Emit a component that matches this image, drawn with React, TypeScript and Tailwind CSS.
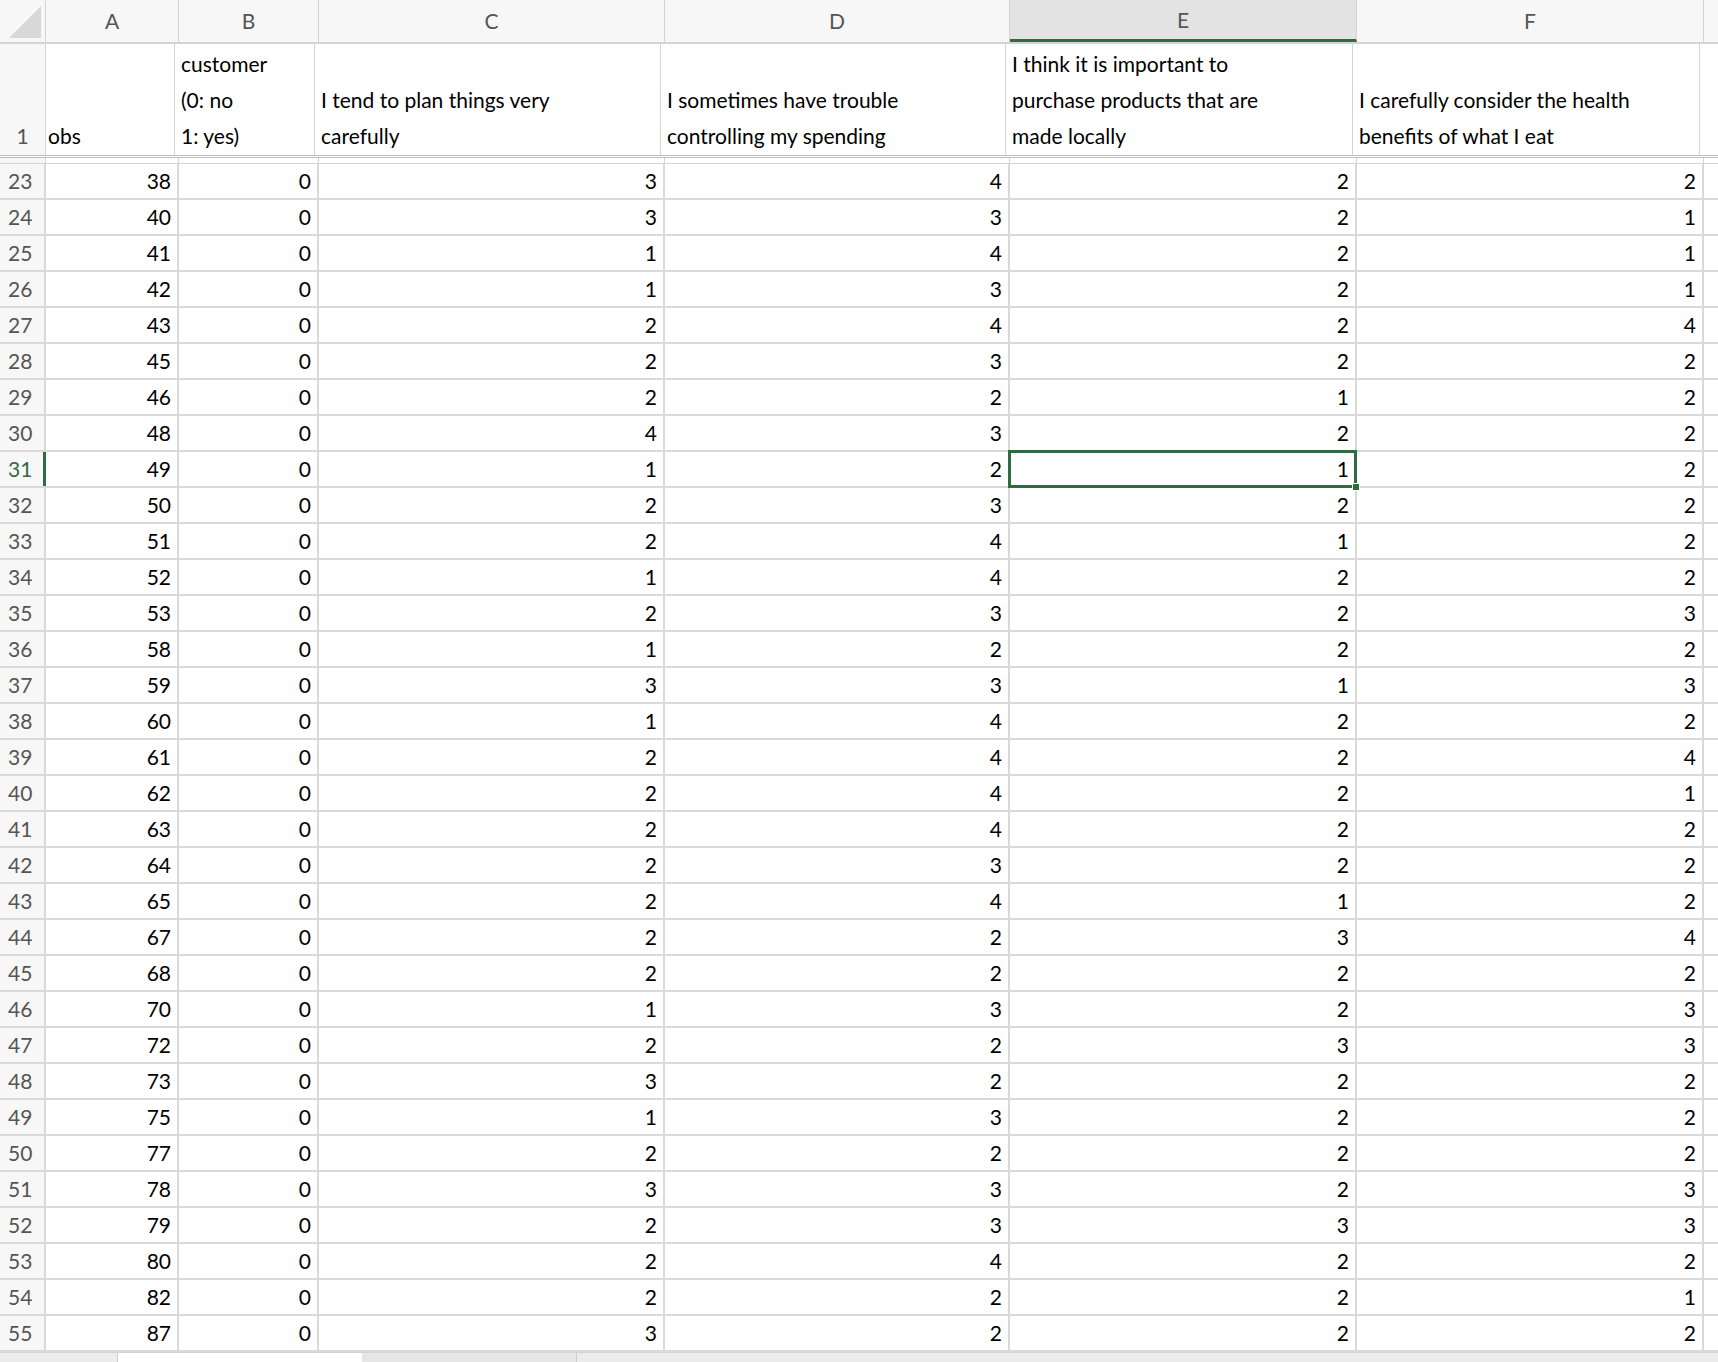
const rows: [number, number, number, number, number, number, number][] = [
  [23, 38, 0, 3, 4, 2, 2],
  [24, 40, 0, 3, 3, 2, 1],
  [25, 41, 0, 1, 4, 2, 1],
  [26, 42, 0, 1, 3, 2, 1],
  [27, 43, 0, 2, 4, 2, 4],
  [28, 45, 0, 2, 3, 2, 2],
  [29, 46, 0, 2, 2, 1, 2],
  [30, 48, 0, 4, 3, 2, 2],
  [31, 49, 0, 1, 2, 1, 2],
  [32, 50, 0, 2, 3, 2, 2],
  [33, 51, 0, 2, 4, 1, 2],
  [34, 52, 0, 1, 4, 2, 2],
  [35, 53, 0, 2, 3, 2, 3],
  [36, 58, 0, 1, 2, 2, 2],
  [37, 59, 0, 3, 3, 1, 3],
  [38, 60, 0, 1, 4, 2, 2],
  [39, 61, 0, 2, 4, 2, 4],
  [40, 62, 0, 2, 4, 2, 1],
  [41, 63, 0, 2, 4, 2, 2],
  [42, 64, 0, 2, 3, 2, 2],
  [43, 65, 0, 2, 4, 1, 2],
  [44, 67, 0, 2, 2, 3, 4],
  [45, 68, 0, 2, 2, 2, 2],
  [46, 70, 0, 1, 3, 2, 3],
  [47, 72, 0, 2, 2, 3, 3],
  [48, 73, 0, 3, 2, 2, 2],
  [49, 75, 0, 1, 3, 2, 2],
  [50, 77, 0, 2, 2, 2, 2],
  [51, 78, 0, 3, 3, 2, 3],
  [52, 79, 0, 2, 3, 3, 3],
  [53, 80, 0, 2, 4, 2, 2],
  [54, 82, 0, 2, 2, 2, 1],
  [55, 87, 0, 3, 2, 2, 2],
];

const widths = ["w-[46px]", "w-[133px]", "w-[140px]", "w-[346px]", "w-[345px]", "w-[347px]", "w-[347px]"];
const letters = ["", "A", "B", "C", "D", "E", "F"];
const headers = [
  "1",
  "obs",
  "customer\n(0: no\n1: yes)",
  "I tend to plan things very\ncarefully",
  "I sometimes have trouble\ncontrolling my spending",
  "I think it is important to\npurchase products that are\nmade locally",
  "I carefully consider the health\nbenefits of what I eat",
];

export default function App() {
  return (
    <div className="w-[1718px] h-[1362px] overflow-hidden bg-white text-[21px] text-black" style={{ fontFamily: "Lato, 'Open Sans', sans-serif" }}>
      {/* column letters */}
      <div className="flex h-[44px] bg-[#f7f7f7] border-b-2 border-[#d4d4d4]">
        {letters.map((l, i) => (
          <div
            key={i}
            className={`${widths[i]} shrink-0 flex items-center justify-center border-r border-[#d4d4d4] text-[#555] ${
              i === 5 ? "bg-[#e3e3e3] text-[#2f6b3f] border-b-[3px] border-b-[#2f6b3f]" : ""
            }`}
          >
            {i === 0 ? (
              <div className="w-full h-full flex items-end justify-end p-1">
                <div className="w-0 h-0 border-l-[32px] border-l-transparent border-b-[32px] border-b-[#d8d8d8]" />
              </div>
            ) : (
              l
            )}
          </div>
        ))}
      </div>
      {/* header row */}
      <div className="flex h-[114px] border-b-[3px] border-double border-[#bdbdbd]">
        {headers.map((h, i) => (
          <div
            key={i}
            className={`${widths[i]} shrink-0 flex items-end border-r border-[#d4d4d4] whitespace-pre-line leading-[36px] pb-[1px] ${
              i === 0 ? "justify-center text-[#555] bg-[#f7f7f7]" : "px-[6px]"
            } ${i === 1 ? "-ml-[4px]" : ""}`}
          >
            {h}
          </div>
        ))}
      </div>
      <div className="h-[6px] flex border-b border-[#d4d4d4]">
        {widths.map((w, i) => (
          <div key={i} className={`${w} shrink-0 border-r border-[#d4d4d4] ${i === 0 ? "bg-[#f7f7f7]" : ""}`} />
        ))}
      </div>
      {rows.map((r) => (
        <div key={r[0]} className="flex h-[36px] border-b-2 border-[#d9d9d9]">
          {r.map((v, i) => (
            <div
              key={i}
              className={`${widths[i]} shrink-0 flex items-center border-r-2 border-[#d9d9d9] ${
                i === 0
                  ? `bg-[#f7f7f7] pl-2 ${r[0] === 31 ? "text-[#2f6b3f] border-r-[3px] border-r-[#2f6b3f] bg-[#e3e3e3]" : "text-[#555]"}`
                  : "justify-end pr-[6px]"
              } ${r[0] === 31 && i === 5 ? "relative" : ""}`}
            >
              {v}
              {r[0] === 31 && i === 5 && (
                <>
                  <div className="absolute -inset-[2px] border-[3px] border-[#2f6b3f]" />
                  <div className="absolute -right-[5px] -bottom-[5px] w-[8px] h-[8px] bg-[#2f6b3f] border border-white" />
                </>
              )}
            </div>
          ))}
        </div>
      ))}
      <div className="flex h-[20px] bg-[#ececec] border-t border-[#d4d4d4]">
        <div className="w-[118px] border-r border-[#ccc]" />
        <div className="w-[244px] bg-white" />
        <div className="w-[215px] bg-[#e6e6e6] border-r border-[#ccc]" />
      </div>
    </div>
  );
}
